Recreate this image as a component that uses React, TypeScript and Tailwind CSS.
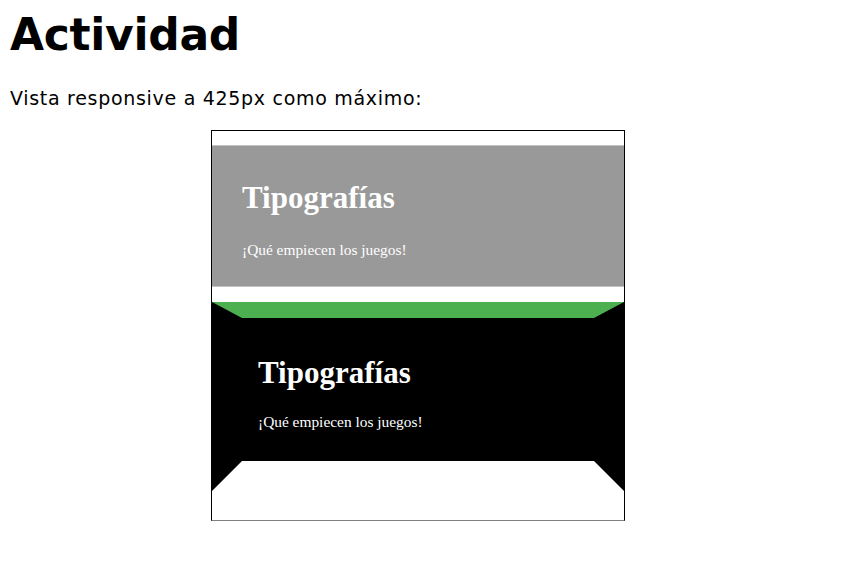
import React from "react";

function Banner({ dark }: { dark?: boolean }) {
  if (dark) {
    return (
      <div className="bg-black border-t-[16px] border-t-[#4caf50] border-x-[30px] border-x-black border-b-[30px] border-b-white pl-4 pt-[37px] pb-[30px]">
        <h2 className="text-[31px] leading-[36px] font-bold text-white">Tipografías</h2>
        <p className="mt-[22px] text-[15.4px] leading-[18px] text-white">¡Qué empiecen los juegos!</p>
      </div>
    );
  }
  return (
    <div className="bg-[#999999] border-y border-[#c2c2c2] pl-[30px] pt-[34px] pb-[27px]">
      <h2 className="text-[31px] leading-[36px] font-bold text-white">Tipografías</h2>
      <p className="mt-[25px] text-[15.4px] leading-[18px] text-white">¡Qué empiecen los juegos!</p>
    </div>
  );
}

export default function App() {
  return (
    <div className="min-h-[568px] bg-white text-black pl-[10px] pt-[13px] font-['DejaVu_Sans',sans-serif]">
      <h1 className="text-[44px] leading-[44px] font-bold tracking-[-0.3px]">Actividad</h1>
      <p className="mt-[32px] text-[19px] leading-[19px] tracking-[0.7px]">
        Vista responsive a 425px como máximo:
      </p>

      <div className="mt-[22px] ml-[201px] w-[414px] h-[391px] border border-black border-b-[#808080] pt-[14px] font-['Liberation_Serif',serif]">
        <Banner />
        <div className="h-[15px]" />
        <Banner dark />
      </div>
    </div>
  );
}
